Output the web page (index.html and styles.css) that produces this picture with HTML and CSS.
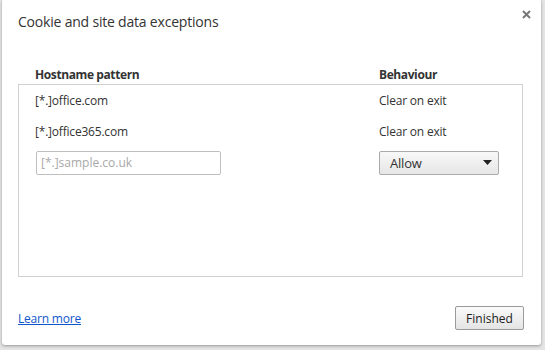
FILE: index.html
```html
<!DOCTYPE html>
<html>
<head>
<meta charset="utf-8">
<link rel="stylesheet" href="styles.css">
</head>
<body>
<div class="dialog">
  <div class="title-row">
    <div class="title">Cookie and site data exceptions</div>
    <div class="close" aria-label="close">
      <svg width="9" height="9" viewBox="0 0 9 9"><path d="M1 1L8 8M8 1L1 8" stroke="#777" stroke-width="2"/></svg>
    </div>
  </div>
  <div class="columns">
    <div class="col-host">Hostname pattern</div>
    <div class="col-beh">Behaviour</div>
  </div>
  <div class="list">
    <div class="row">
      <div class="col-host">[*.]office.com</div>
      <div class="col-beh">Clear on exit</div>
    </div>
    <div class="row">
      <div class="col-host">[*.]office365.com</div>
      <div class="col-beh">Clear on exit</div>
    </div>
    <div class="row edit">
      <div class="col-host"><input class="input" placeholder="[*.]sample.co.uk"></div>
      <div class="col-beh">
        <div class="select"><span>Allow</span><svg width="9" height="5" viewBox="0 0 9 5"><path d="M0 0H9L4.5 5Z" fill="#222"/></svg></div>
      </div>
    </div>
  </div>
  <div class="footer">
    <a class="link" href="#">Learn more</a>
    <button class="btn">Finished</button>
  </div>
</div>
</body>
</html>
```

FILE: styles.css
```css
html, body {
  margin: 0;
  padding: 0;
}
body {
  width: 545px;
  height: 350px;
  background: #e4e4e4;
  font-family: "Open Sans", "Noto Sans", sans-serif;
  color: #333;
  overflow: hidden;
}
.dialog {
  box-sizing: border-box;
  margin: -1px 0 0 2px;
  width: 539px;
  height: 346px;
  background: #fff;
  border-radius: 3px;
  box-shadow: 0 1px 3px rgba(0,0,0,0.35);
  display: flex;
  flex-direction: column;
  padding: 0 18px 0 16px;
}
.title-row {
  display: flex;
  justify-content: space-between;
  align-items: flex-start;
  height: 65px;
}
.title {
  font-size: 14px;
  color: #333;
  margin-top: 13px;
  letter-spacing: -0.2px;
}
.close {
  display: flex;
  margin-top: 11px;
  margin-right: -8px;
}
.columns, .row {
  display: grid;
  grid-template-columns: 344px 1fr;
  padding-left: 17px;
}
.columns {
  font-size: 12px;
  font-weight: bold;
  height: 20px;
  align-items: center;
  color: #333;
  letter-spacing: -0.4px;
}
.list {
  border: 1px solid #d0d0d0;
  box-sizing: border-box;
  height: 193px;
  font-size: 12px;
  color: #333;
  padding-top: 0;
}
.row {
  height: 31px;
  align-items: center;
  padding-left: 16px;
  letter-spacing: -0.2px;
}
.row.edit {
  height: 31px;
}
.input {
  box-sizing: border-box;
  width: 185px;
  height: 24px;
  border: 1px solid #bfbfbf;
  border-radius: 2px;
  font: inherit;
  font-size: 12px;
  padding: 0 4px;
  margin-left: 1px;
}
.input::placeholder {
  color: #a8a8a8;
}
.select {
  box-sizing: border-box;
  width: 120px;
  height: 24px;
  border: 1px solid #aaa;
  border-radius: 2px;
  background: linear-gradient(#f8f8f8, #e6e6e6);
  display: flex;
  align-items: center;
  justify-content: space-between;
  padding: 0 6px 0 10px;
  font-size: 13px;
  color: #333;
}
.footer {
  display: flex;
  justify-content: space-between;
  align-items: center;
  margin-top: 29px;
}
.link {
  color: #1155cc;
  font-size: 12px;
  letter-spacing: -0.2px;
}
.btn {
  box-sizing: border-box;
  width: 69px;
  height: 24px;
  margin-right: -1px;
  border: 1px solid #9a9a9a;
  border-radius: 2px;
  background: linear-gradient(#fafafa, #e4e4e4);
  font-family: inherit;
  font-size: 12px;
  color: #222;
  padding: 0;
}
```
